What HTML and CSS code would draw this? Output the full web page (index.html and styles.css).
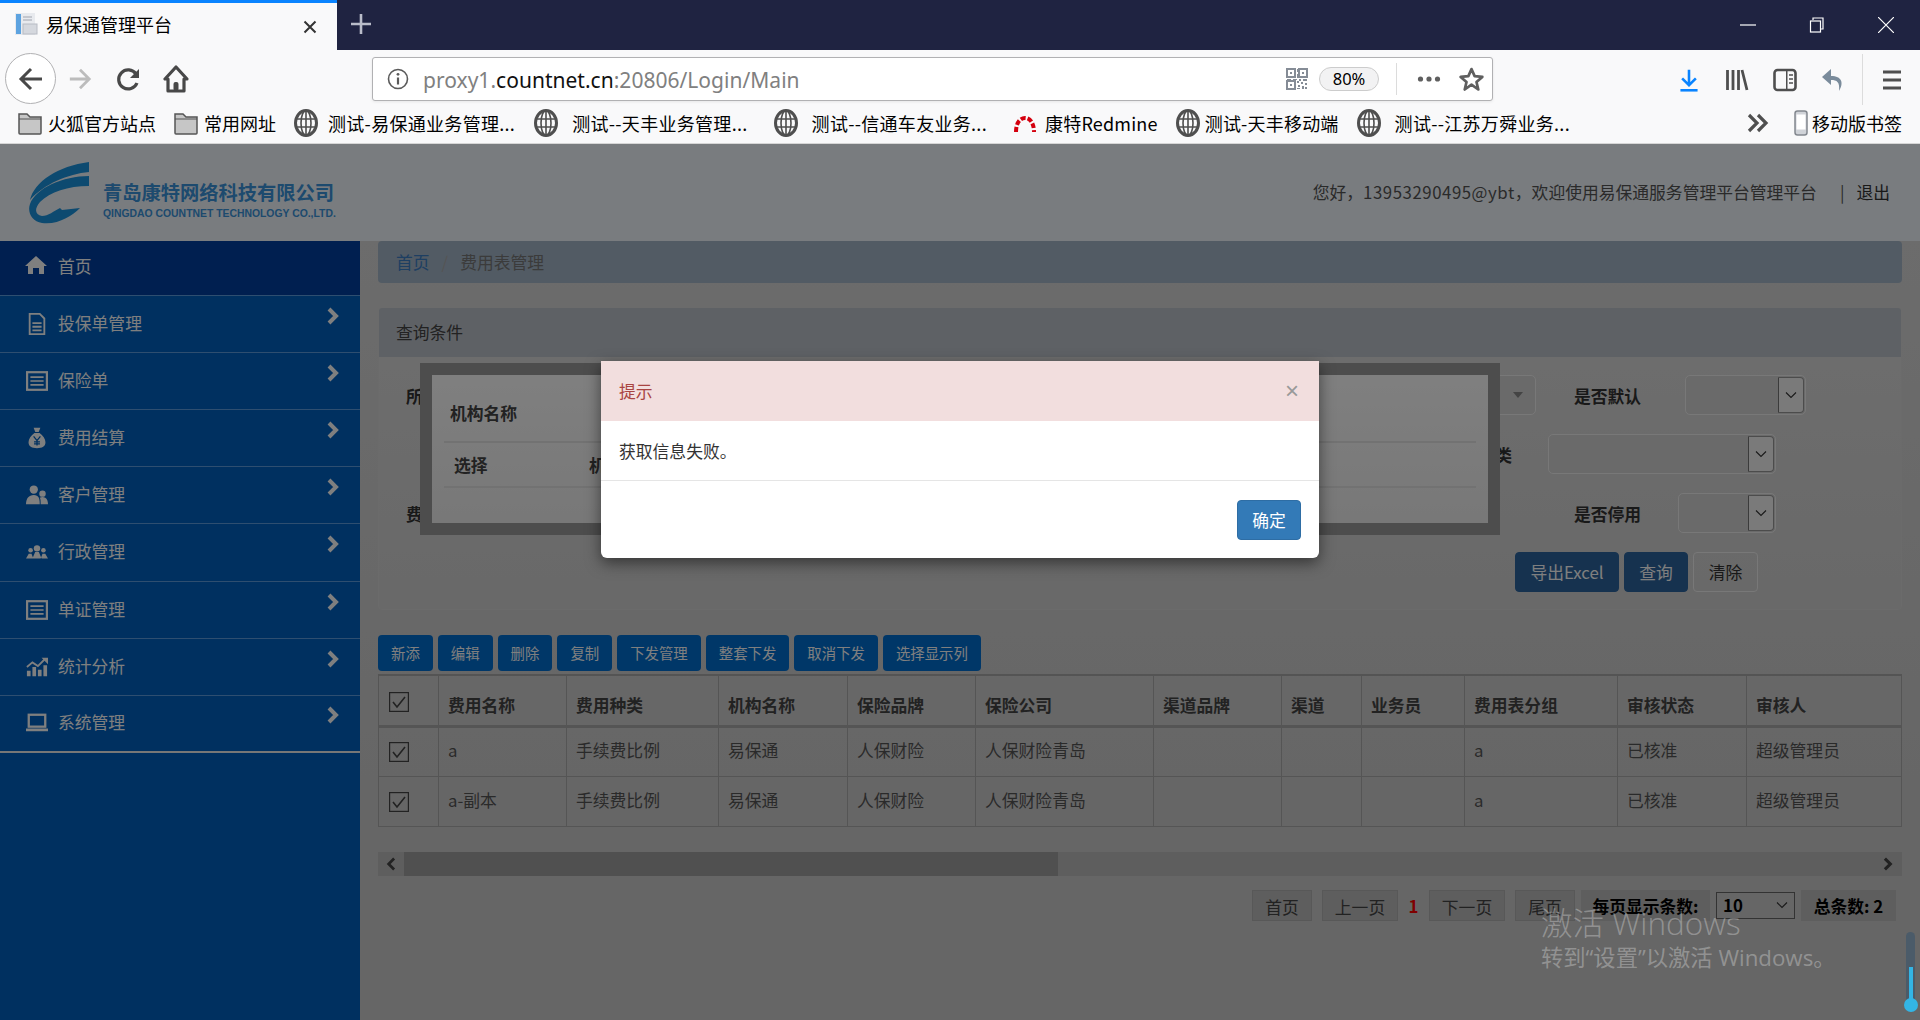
FILE: index.html
```html
<!DOCTYPE html>
<html lang="zh-CN">
<head>
<meta charset="utf-8">
<title>易保通管理平台</title>
<link rel="stylesheet" href="styles.css">
</head>
<body>
<svg class="defs" width="0" height="0">
  <symbol id="globe" viewBox="0 0 24 28"><ellipse cx="12" cy="14" rx="10.500" ry="12.500" fill="none" stroke="#4f4f4f" stroke-width="3"/><ellipse cx="12" cy="14" rx="5" ry="12.500" fill="none" stroke="#4f4f4f" stroke-width="1.600"/><path d="M2 10h20M2 18h20M12 2v24" stroke="#4f4f4f" stroke-width="1.600"/></symbol>
  <symbol id="folder" viewBox="0 0 24 24"><path d="M1 3h8l3 3h11v16a1 1 0 0 1-1 1H2a1 1 0 0 1-1-1z" fill="#c6c6c6" stroke="#555" stroke-width="1.500"/><path d="M1 8h22" stroke="#555" stroke-width="1"/></symbol>
  <symbol id="chev" viewBox="0 0 14 18"><path d="M3 2l7 7-7 7" fill="none" stroke="currentColor" stroke-width="4"/></symbol>
  <symbol id="down" viewBox="0 0 12 8"><path d="M1 1.500l5 5 5-5" fill="none" stroke="currentColor" stroke-width="1.100"/></symbol>
  <symbol id="check" viewBox="0 0 20 20"><rect x="0.600" y="0.600" width="18.800" height="18.800" fill="none" stroke="#444" stroke-width="1.200"/><path d="M4 10l4 5 8-10" fill="none" stroke="#444" stroke-width="1.600"/></symbol>
  <symbol id="listicon" viewBox="0 0 20 18"><rect x="1" y="1" width="18" height="16" fill="none" stroke="#fff" stroke-width="2"/><path d="M4 5.500h12M4 9h12M4 12.500h12" stroke="#fff" stroke-width="1.500"/></symbol>
</svg>

<header class="tabstrip">
  <div class="tab">
    <svg class="favicon" viewBox="0 0 24 24"><rect x="1" y="1" width="20" height="22" fill="#e8eaee"/><rect x="2" y="2" width="5" height="20" fill="#5da3e0"/><rect x="9" y="12" width="14" height="10" fill="#d5d8de" stroke="#b8bcc4"/><path d="M9 5h9M9 8h9" stroke="#b8bcc4" stroke-width="1.500"/></svg>
    <span class="tab-title">易保通管理平台</span>
    <svg class="tab-close" viewBox="0 0 14 14"><path d="M1.500 1.500l11 11M12.500 1.500l-11 11" stroke="#333" stroke-width="2"/></svg>
  </div>
  <svg class="tab-new" viewBox="0 0 22 22"><path d="M11 1v20M1 11h20" stroke="#b9bcc9" stroke-width="2.600"/></svg>
  <div class="winctl">
    <svg class="winbtn" viewBox="0 0 16 16"><path d="M0 8h16" stroke="#fff" stroke-width="1.200"/></svg>
    <svg class="winbtn" viewBox="0 0 16 16"><path d="M4 3V1h10v11h-3" fill="none" stroke="#fff" stroke-width="1.200"/><rect x="1.500" y="4" width="10" height="11" fill="none" stroke="#fff" stroke-width="1.200"/></svg>
    <svg class="winbtn" viewBox="0 0 16 16"><path d="M0 0l16 16M16 0L0 16" stroke="#fff" stroke-width="1.200"/></svg>
  </div>
</header>

<nav class="navbar">
  <div class="backbtn"><svg class="nav-ic" viewBox="0 0 26 26"><path d="M24 13H4M13 3L3 13l10 10" fill="none" stroke="#484848" stroke-width="3"/></svg></div>
  <svg class="nav-ic fwd" viewBox="0 0 26 26"><path d="M2 13h20M13 3l10 10-10 10" fill="none" stroke="#bcbcbc" stroke-width="3"/></svg>
  <svg class="nav-ic reload" viewBox="0 0 26 26"><path d="M21 16a9.500 9.500 0 1 1-1-9" fill="none" stroke="#484848" stroke-width="3.200"/><path d="M23 2v9h-9z" fill="#484848"/></svg>
  <svg class="nav-ic home" viewBox="0 0 26 28"><path d="M13 2L2 14h3v12h16V14h3z" fill="none" stroke="#484848" stroke-width="3.200" stroke-linejoin="round"/><rect x="10.500" y="17" width="5" height="9" rx="2" fill="#484848"/></svg>
  <div class="urlbar">
    <svg class="url-info" viewBox="0 0 22 22"><circle cx="11" cy="11" r="9.500" fill="none" stroke="#5a5a5a" stroke-width="1.600"/><path d="M11 9.500v7" stroke="#5a5a5a" stroke-width="2.200"/><circle cx="11" cy="6.300" r="1.400" fill="#5a5a5a"/></svg>
    <span class="url-text">proxy1.<b class="url-host">countnet.cn</b>:20806/Login/Main</span>
    <svg class="url-qr" viewBox="0 0 22 22"><path d="M1 1h8v8H1zM13 1h8v8h-8zM1 13h8v8H1z" fill="none" stroke="#858c96" stroke-width="2"/><path d="M4 4h2v2H4zM16 4h2v2h-2zM4 16h2v2H4zM11 1h1v3h-1zM11 6h1v4h-1zM1 11h4v1H1zM7 11h4v1H7zM13 11h2v2h-2zM17 11h4v2h-4zM11 13h2v2h-2zM15 14h2v2h-2zM19 15h2v2h-2zM12 17h2v2h-2zM16 18h2v3h-2zM11 20h3v1h-3zM19 19h2v2h-2z" fill="#858c96"/></svg>
    <span class="url-zoom">80%</span>
    <span class="url-sep"></span>
    <svg class="url-more" viewBox="0 0 24 6"><circle cx="3.500" cy="3" r="2.600" fill="#5f5f5f"/><circle cx="12" cy="3" r="2.600" fill="#5f5f5f"/><circle cx="20.500" cy="3" r="2.600" fill="#5f5f5f"/></svg>
    <svg class="url-star" viewBox="0 0 24 24"><path d="M12 2l3 6.800 7.400.7-5.600 4.900 1.700 7.200L12 17l-6.500 4.600 1.700-7.200L1.600 9.500 9 8.800z" fill="none" stroke="#5f5f5f" stroke-width="2.600" stroke-linejoin="round"/></svg>
  </div>
  <div class="tools">
    <svg class="tool" viewBox="0 0 24 28"><path d="M12 2v17M4 12l8 8 8-8" fill="none" stroke="#0a84ff" stroke-width="3"/><path d="M2 26h20" stroke="#0a84ff" stroke-width="3"/></svg>
    <svg class="tool" viewBox="0 0 24 24"><path d="M2.500 2v20M8 2v20M13.500 2v20M17 2l5 20" fill="none" stroke="#4f4f4f" stroke-width="2.800"/></svg>
    <svg class="tool" viewBox="0 0 24 24"><rect x="1.500" y="2" width="21" height="20" rx="3" fill="none" stroke="#4f4f4f" stroke-width="2.600"/><path d="M13 2h1.500v20H13z" fill="#4f4f4f"/><path d="M16 7h4M16 11h4M16 15h4" stroke="#4f4f4f" stroke-width="1.500"/></svg>
    <svg class="tool" viewBox="0 0 24 24"><path d="M10 1L1 9l9 8v-5c6 0 9 2 8 11 5-8 3-15-8-15z" fill="#7a8b9b"/></svg>
    <span class="tool-sep"></span>
    <svg class="tool" viewBox="0 0 24 24"><path d="M3 4h18M3 12h18M3 20h18" stroke="#4f4f4f" stroke-width="3.200"/></svg>
  </div>
</nav>

<div class="bookmarks">
  <span class="bm"><svg class="bm-ic"><use href="#folder"/></svg><span class="bm-gap-s">火狐官方站点</span></span>
  <span class="bm"><svg class="bm-ic"><use href="#folder"/></svg><span class="bm-gap-s">常用网址</span></span>
  <span class="bm"><svg class="bm-ic globe"><use href="#globe"/></svg><span class="bm-gap-m">测试-易保通业务管理...</span></span>
  <span class="bm"><svg class="bm-ic globe"><use href="#globe"/></svg><span class="bm-gap-l">测试--天丰业务管理...</span></span>
  <span class="bm"><svg class="bm-ic globe"><use href="#globe"/></svg><span class="bm-gap-l">测试--信通车友业务...</span></span>
  <span class="bm"><svg class="bm-ic" viewBox="0 0 24 24"><path d="M3 21c0-9 4-14 9-14s9 5 9 14" fill="none" stroke="#d4000e" stroke-width="4" stroke-dasharray="5 2"/></svg><span class="bm-gap-r">康特Redmine</span></span>
  <span class="bm"><svg class="bm-ic globe"><use href="#globe"/></svg><span class="bm-gap-xs">测试-天丰移动端</span></span>
  <span class="bm"><svg class="bm-ic globe"><use href="#globe"/></svg><span class="bm-gap-l">测试--江苏万舜业务...</span></span>
  <span class="bm-right">
    <svg class="bm-more" viewBox="0 0 22 20"><path d="M2 2l8 8-8 8M11 2l8 8-8 8" fill="none" stroke="#4f4f4f" stroke-width="3.200"/></svg>
    <svg class="bm-phone" viewBox="0 0 14 26"><rect x="1" y="1" width="12" height="24" rx="2.500" fill="#d0d3d8" stroke="#83888f" stroke-width="1.500"/><rect x="2.500" y="4.500" width="9" height="15" fill="#fff"/></svg>
    <span>移动版书签</span>
  </span>
</div>

<div class="page">
  <div class="site-header">
    <svg class="logo" viewBox="0 0 61 63"><path d="M61 0v10C40 12 16 22 2 38 6 20 30 4 61 0z" fill="#1a94e0"/><path d="M61 14v10c-21 0-39 6-49 16-6 7-5 13 2 14 6 0 12-5 18-8l2 2 18-2c-8 8-22 17-38 15C4 60-1 50 2 42c6-16 33-28 59-28z" fill="#1a94e0"/></svg>
    <div class="brand">
      <div class="brand-cn">青岛康特网络科技有限公司</div>
      <div class="brand-en">QINGDAO COUNTNET TECHNOLOGY CO.,LTD.</div>
    </div>
    <div class="userbar">
      <span>您好，<span class="latin">13953290495@ybt</span>，欢迎使用易保通服务管理平台管理平台</span>
      <span class="userbar-sep">|</span>
      <span class="logout">退出</span>
    </div>
  </div>

  <div class="site-body">
    <aside class="sidebar">
      <div class="menu-item current">
        <svg class="menu-ic home-ic" viewBox="0 0 24 20"><path d="M12 1l11 10h-3v8h-5v-6H9v6H4v-8H1z" fill="#fff"/></svg>
        <span class="menu-text">首页</span>
      </div>
      <div class="menu-item">
        <svg class="menu-ic" viewBox="0 0 20 24"><path d="M2 1h11l5 5v17H2z" fill="none" stroke="#fff" stroke-width="2"/><path d="M5 11h10M5 15h10M5 19h10" stroke="#fff" stroke-width="2"/></svg>
        <span class="menu-text">投保单管理</span><svg class="menu-chev"><use href="#chev"/></svg>
      </div>
      <div class="menu-item">
        <svg class="menu-ic"><use href="#listicon"/></svg>
        <span class="menu-text">保险单</span><svg class="menu-chev"><use href="#chev"/></svg>
      </div>
      <div class="menu-item">
        <svg class="menu-ic" viewBox="0 0 24 26"><path d="M8 1h8l-2 5h-4zM9 7h6c4 3 7 7 7 11 0 5-4 7-10 7S2 23 2 18c0-4 3-8 7-11z" fill="#fff"/><path d="M8 11l4 5 4-5M12 16v6M8.500 17.500h7M8.500 20h7" fill="none" stroke="#0060c0" stroke-width="1.500"/></svg>
        <span class="menu-text">费用结算</span><svg class="menu-chev"><use href="#chev"/></svg>
      </div>
      <div class="menu-item">
        <svg class="menu-ic" viewBox="0 0 24 22"><circle cx="8.500" cy="5" r="4.500" fill="#fff"/><path d="M0 21c0-6 3-10 8.500-10S15 15 15 21z" fill="#fff"/><circle cx="18" cy="9.500" r="3.500" fill="#fff"/><path d="M16 21c0-3 0-6-1-7 2-1 4-1 6 0 2 1 3 4 3 7z" fill="#fff"/></svg>
        <span class="menu-text">客户管理</span><svg class="menu-chev"><use href="#chev"/></svg>
      </div>
      <div class="menu-item">
        <svg class="menu-ic" viewBox="0 0 24 16"><circle cx="12" cy="4" r="3.500" fill="#fff"/><circle cx="5" cy="6" r="2.500" fill="#fff"/><circle cx="19" cy="6" r="2.500" fill="#fff"/><path d="M0 15l3-5h3l2 5zM24 15l-3-5h-3l-2 5zM7 15l3-7h4l3 7z" fill="#fff"/></svg>
        <span class="menu-text">行政管理</span><svg class="menu-chev"><use href="#chev"/></svg>
      </div>
      <div class="menu-item">
        <svg class="menu-ic"><use href="#listicon"/></svg>
        <span class="menu-text">单证管理</span><svg class="menu-chev"><use href="#chev"/></svg>
      </div>
      <div class="menu-item">
        <svg class="menu-ic" viewBox="0 0 24 20"><path d="M1 14h4v6H1zM7 10h4v10H7zM13 13h4v7h-4zM19 8h4v12h-4z" fill="#fff"/><path d="M1 10l6-5 6 4 8-8" fill="none" stroke="#fff" stroke-width="2"/><path d="M17 0h7v7z" fill="#fff"/></svg>
        <span class="menu-text">统计分析</span><svg class="menu-chev"><use href="#chev"/></svg>
      </div>
      <div class="menu-item last">
        <svg class="menu-ic" viewBox="0 0 24 20"><rect x="3" y="1" width="18" height="13" fill="none" stroke="#fff" stroke-width="2.500"/><path d="M0 16h24v3H0z" fill="#fff"/></svg>
        <span class="menu-text">系统管理</span><svg class="menu-chev"><use href="#chev"/></svg>
      </div>
    </aside>

    <main class="content">
      <div class="crumbs"><span class="crumb-link">首页</span><span class="crumb-sep">/</span><span>费用表管理</span></div>

      <section class="panel">
        <div class="panel-head">查询条件</div>
        <div class="panel-body">
          <div class="form-row">
            <span class="lbl">所属机构</span>
            <span class="grow"></span>
            <span class="combo combo-a"><span class="caret"></span></span>
            <span class="lbl lbl-right w-a">是否默认</span>
            <span class="combo combo-b"><span class="combo-btn"><svg class="combo-chev"><use href="#down"/></svg></span></span>
          </div>
          <div class="form-row row-inset">
            <span class="grow"></span>
            <span class="lbl lbl-kind">费用种类</span>
            <span class="combo combo-c"><span class="combo-btn"><svg class="combo-chev"><use href="#down"/></svg></span></span>
          </div>
          <div class="form-row row-inset">
            <span class="lbl">费用名称</span>
            <span class="grow"></span>
            <span class="lbl w-b">是否停用</span>
            <span class="combo combo-d"><span class="combo-btn"><svg class="combo-chev"><use href="#down"/></svg></span></span>
          </div>
          <div class="form-row row-btns">
            <button class="btn btn-primary">导出Excel</button>
            <button class="btn btn-primary">查询</button>
            <button class="btn btn-plain">清除</button>
          </div>
        </div>
      </section>

      <div class="actions">
        <button class="act">新添</button><button class="act">编辑</button><button class="act">删除</button><button class="act">复制</button><button class="act">下发管理</button><button class="act">整套下发</button><button class="act">取消下发</button><button class="act">选择显示列</button>
      </div>

      <table class="grid">
        <thead>
          <tr><th><svg class="chk"><use href="#check"/></svg></th><th>费用名称</th><th>费用种类</th><th>机构名称</th><th>保险品牌</th><th>保险公司</th><th>渠道品牌</th><th>渠道</th><th>业务员</th><th>费用表分组</th><th>审核状态</th><th>审核人</th></tr>
        </thead>
        <tbody>
          <tr><td><svg class="chk"><use href="#check"/></svg></td><td>a</td><td>手续费比例</td><td>易保通</td><td>人保财险</td><td>人保财险青岛</td><td></td><td></td><td></td><td>a</td><td>已核准</td><td>超级管理员</td></tr>
          <tr><td><svg class="chk"><use href="#check"/></svg></td><td>a-副本</td><td>手续费比例</td><td>易保通</td><td>人保财险</td><td>人保财险青岛</td><td></td><td></td><td></td><td>a</td><td>已核准</td><td>超级管理员</td></tr>
        </tbody>
      </table>

      <div class="hscroll">
        <svg class="hs-arrow hs-left" viewBox="0 0 14 18"><path d="M11 2L4 9l7 7" fill="none" stroke="currentColor" stroke-width="3.500"/></svg>
        <span class="hs-thumb"></span>
        <svg class="hs-arrow hs-right"><use href="#chev"/></svg>
      </div>

      <div class="pager">
        <span class="pg w-60">首页</span>
        <span class="pg w-76 ml-10">上一页</span>
        <span class="pg-cur">1</span>
        <span class="pg w-76">下一页</span>
        <span class="pg w-60 ml-10">尾页</span>
        <span class="pg-info w-129 ml-6">每页显示条数:</span>
        <span class="pg-select ml-6">10<svg class="combo-chev"><use href="#down"/></svg></span>
        <span class="pg-info w-95 ml-6">总条数: 2</span>
      </div>
    </main>
  </div>

  <div class="picker">
    <div class="picker-inner">
      <div class="picker-title">机构名称</div>
      <div class="picker-cols"><span class="pc-a">选择</span><span>机构名称</span></div>
    </div>
  </div>

  <div class="backdrop"></div>

  <div class="modal">
    <div class="modal-head"><span>提示</span><span class="modal-x">×</span></div>
    <div class="modal-body">获取信息失败。</div>
    <div class="modal-foot"><button class="modal-ok">确定</button></div>
  </div>

  <div class="activate">
    <div class="act-1">激活 Windows</div>
    <div class="act-2">转到“设置”以激活 Windows。</div>
  </div>
  <div class="slider"><span class="slider-fill"></span><span class="slider-dot"></span></div>
</div>
</body>
</html>
```
FILE: styles.css
```css
* { box-sizing: border-box; }
html, body { margin: 0; height: 100%; }
body {
  width: 1920px; height: 1020px; overflow: hidden;
  display: flex; flex-direction: column;
  font-family: "Noto Sans CJK SC", "Noto Sans", sans-serif;
  background: #ccc; color: #000;
}
.defs { position: absolute; }

/* browser chrome */
.tabstrip { height: 50px; background: #1f2341; display: flex; align-items: stretch; flex: none; }
.tab { width: 337px; background: #f9f9fa; border-top: 3px solid #0a84ff; display: flex; align-items: center; padding: 0 0 6px 14px; }
.favicon { width: 24px; height: 24px; }
.tab-title { margin-left: 8px; font-size: 18px; line-height: 24px; flex: 1; }
.tab-close { width: 14px; height: 14px; margin-right: 20px; margin-top: 6px; }
.tab-new { width: 22px; height: 22px; margin: 13px 0 0 13px; }
.winctl { margin-left: auto; display: flex; align-items: center; gap: 53px; padding-right: 26px; }
.winbtn { width: 16px; height: 16px; }

.navbar { height: 51px; background: #f9f9fa; position: relative; display: flex; align-items: center; flex: none; padding-left: 5px; z-index: 2; }
.backbtn { width: 51px; height: 51px; margin: 9px 0 3px; border-radius: 50%; background: #fff; border: 1px solid #b1b1b3; display: flex; align-items: center; justify-content: center; }
.nav-ic { width: 26px; height: 26px; }
.fwd { margin: 9px 0 3px 12px; width: 24px; height: 24px; }
.reload { margin: 10px 0 2px 24px; }
.home { margin: 9px 0 3px 21px; height: 28px; }
.urlbar { width: 1121px; height: 44px; margin: 7px 0 0 183px; background: #fff; border: 1px solid #b1b1b3; border-radius: 3px; display: flex; align-items: center; box-shadow: 0 1px 3px rgba(0,0,0,.08); }
.url-info { width: 22px; height: 22px; margin-left: 14px; }
.url-text { margin: 2px 0 0 14px; font-family: "Noto Sans", sans-serif; font-size: 21px; line-height: 28px; color: #808080; flex: 1; letter-spacing: .02px; }
.url-host { font-weight: 400; color: #111; }
.url-qr { width: 22px; height: 22px; }
.url-zoom { width: 60px; height: 24px; margin-left: 11px; border: 1px solid #ccc; border-radius: 12px; background: #f2f2f3; font-family: "Noto Sans", sans-serif; font-size: 16.500px; line-height: 22px; text-align: center; }
.url-sep { width: 1px; height: 32px; background: #dcdcdc; margin-left: 17px; }
.url-more { width: 24px; height: 6px; margin-left: 20px; }
.url-star { width: 25px; height: 25px; margin: 0 8px 0 18px; }
.tools { display: flex; align-items: center; margin-left: 184px; gap: 24px; margin-top: 8px; }
.tool { width: 24px; height: 24px; }
.tool-sep { width: 1px; height: 51px; background: #dcdcdc; margin: 0 -7px 0 -7px; }

.bookmarks { height: 43px; flex: none; background: #f9f9fa; border-bottom: 1px solid #d6d6d6; display: flex; align-items: center; padding: 2px 0 0 18px; font-size: 18px; line-height: 24px; gap: 18px; }
.bm { display: flex; align-items: center; white-space: nowrap; }
.bm-ic { width: 24px; height: 24px; }
.bm-ic.globe { height: 28px; }
.bm-gap-s { margin-left: 6px; }
.bm-gap-m { margin: 0 1px 0 10px; letter-spacing: .3px; }
.bm-gap-l { margin: 0 8px 0 14px; letter-spacing: .3px; }
.bm-gap-r { margin-left: 8px; letter-spacing: .2px; }
.bm-gap-xs { margin-left: 5px; letter-spacing: .2px; }
.bm-right { margin-left: auto; display: flex; align-items: center; padding-right: 18px; }
.bm-more { width: 22px; height: 20px; }
.bm-phone { width: 14px; height: 26px; margin: 0 4px 0 25px; }

/* page */
.page { flex: 1; position: relative; display: flex; flex-direction: column; min-height: 0; }
.site-header { height: 97px; flex: none; background: #f2f8fe; display: flex; align-items: flex-start; position: relative; }
.logo { width: 61px; height: 63px; margin: 18px 0 0 28px; }
.brand { margin: 35px 0 0 14px; }
.brand-cn { font-size: 19.250px; line-height: 26px; font-weight: 700; color: #3a94dc; white-space: nowrap; }
.brand-en { margin-top: 2px; font-family: "Liberation Sans", sans-serif; font-size: 10.400px; line-height: 14px; font-weight: 700; color: #3a94dc; white-space: nowrap; }
.userbar { margin-left: auto; padding: 35px 30px 0 0; font-size: 16.800px; line-height: 26px; color: #555; display: flex; }
.latin { letter-spacing: .55px; }
.userbar-sep { margin: 0 12px 0 23px; }
.logout { color: #333; }

.site-body { flex: 1; display: flex; min-height: 0; background: linear-gradient(#d8d8d8, #cccccc 75%); }
.sidebar { width: 360px; flex: none; background: #0060c0; color: #fff; font-size: 16.800px; line-height: 24px; }
.menu-item { height: 57.120px; display: flex; align-items: center; padding-left: 26px; border-bottom: 1px solid #5c9ce0; }
.menu-item.current { height: 55px; background: #003ea0; padding: 0 0 3px 24px; }
.menu-item.last { border-bottom: 2px solid #eee; }
.menu-text { margin-bottom: 2px; }
.menu-ic { width: 22px; height: 22px; margin-right: 10px; flex: none; }
.home-ic { width: 24px; margin-right: 10px; margin-bottom: 3px; }
.menu-chev { width: 14px; height: 18px; margin: 0 20px 16px auto; color: #fff; }

.content { flex: 1; min-width: 0; padding: 0 18px; }
.crumbs { height: 42px; background: #a4b6c8; border-radius: 4px; padding: 0 18px 1px; display: flex; align-items: center; font-size: 16.800px; line-height: 24px; color: #777; margin-bottom: 24px; }
.crumb-link { color: #3c7ec4; }
.crumb-sep { margin: 0 12px; color: #aaa; }
.panel { height: 303px; border-radius: 4px; background: linear-gradient(#dcdcdc, #d2d2d2); border: 1px solid #d6d6d6; margin-bottom: 25px; overflow: hidden; }
.panel-head { height: 49px; background: #bcc2ca; padding: 0 17px; font-size: 16.800px; line-height: 48px; color: #444; }
.panel-body { padding: 18px 97px 0 27px; display: flex; flex-direction: column; gap: 19px; }
.form-row { height: 40px; display: flex; align-items: center; font-size: 16.800px; font-weight: 700; color: #333; }
.row-inset { padding-right: 28px; }
.row-btns { justify-content: flex-end; gap: 5px; padding-right: 46px; font-weight: 400; }
.grow { flex: 1; }
.lbl { line-height: 24px; white-space: nowrap; margin-top: 1px; }
.lbl-right { margin-left: 38px; }
.w-a { width: 111px; }
.w-b { width: 104px; }
.lbl-kind { margin-right: 36px; }
.combo { height: 40px; background: #d4d4d4; border: 1px solid #f0f0f0; border-radius: 5px; display: flex; justify-content: flex-end; align-items: stretch; }
.combo-a { width: 96px; align-items: center; padding-right: 12px; }
.combo-b { width: 121px; margin-right: -2px; }
.combo-c { width: 228px; }
.combo-d { width: 98px; }
.caret { border: 5px solid transparent; border-top: 6px solid #888; border-bottom: 0; }
.combo-btn { width: 26px; margin: 1px; background: #f4f4f4; border: 1px solid #999; border-left-color: #777; display: flex; align-items: center; justify-content: center; border-radius: 0 4px 4px 0; }
.combo-chev { width: 12px; height: 8px; color: #333; }
.btn { height: 40px; border-radius: 4px; font: inherit; line-height: 24px; padding: 0 0 1px; }
.btn-primary { background: #2c649e; border: 1px solid #2c649e; color: #fff; width: 104px; }
.btn-primary + .btn-primary { width: 64px; }
.btn-plain { background: transparent; border: 1px solid #f0f0f0; color: #333; width: 65px; }

.actions { display: flex; gap: 5px; margin-bottom: 3px; }
.act { height: 36px; padding: 0 13px; border: 0; border-radius: 4px; background: #006ed0; color: #fff; font: 14.400px/20px "Noto Sans CJK SC", sans-serif; }

.grid { width: 1524px; table-layout: fixed; border-collapse: collapse; border-top: 2px solid #a8a8a8; font-size: 16.800px; color: #555; }
.grid th, .grid td { border-left: 1px solid #aaa; border-right: 1px solid #aaa; text-align: left; padding: 0 9px 3px; line-height: 24px; }
.grid th { height: 51px; border-bottom: 3px solid #aaa; font-weight: 700; color: #444; vertical-align: bottom; padding-bottom: 8px; }
.grid td { height: 50px; border-bottom: 1px solid #aaa; }
.grid th:first-child { vertical-align: middle; padding: 3px 0 0 10px; }
.grid td:first-child { padding: 1px 0 0 10px; }
.grid th:nth-child(1) { width: 60px; }
.grid th:nth-child(2) { width: 128px; }
.grid th:nth-child(3) { width: 152px; }
.grid th:nth-child(4) { width: 129px; }
.grid th:nth-child(5) { width: 128px; }
.grid th:nth-child(6) { width: 178px; }
.grid th:nth-child(7) { width: 128px; }
.grid th:nth-child(8) { width: 80px; }
.grid th:nth-child(9) { width: 103px; }
.grid th:nth-child(10) { width: 153px; }
.grid th:nth-child(11) { width: 129px; }
.chk { width: 20px; height: 20px; display: block; }

.hscroll { height: 24px; margin-top: 25px; background: #bcbcbc; display: flex; align-items: center; color: #444; }
.hs-arrow { width: 14px; height: 14px; flex: none; }
.hs-left { margin: 0 6px; }
.hs-thumb { width: 654px; height: 24px; background: #a0a0a0; }
.hs-right { margin-left: auto; margin-right: 7px; }

.pager { margin-top: 14px; padding-right: 6px; height: 31px; display: flex; justify-content: flex-end; align-items: stretch; font-size: 16.800px; line-height: 32px; color: #444; }
.pg { background: #bcbcbc; border: 1px solid #b0b0b0; text-align: center; }
.w-60 { width: 60px; }
.w-76 { width: 76px; }
.w-129 { width: 129px; }
.w-95 { width: 95px; }
.ml-10 { margin-left: 10px; }
.ml-6 { margin-left: 6px; }
.pg-cur { width: 31px; text-align: center; color: #f00; font-weight: 700; }
.pg-info { background: #bcbcbc; color: #000; font-weight: 700; text-align: center; }
.pg-select { width: 79px; height: 27px; margin-top: 2px; border: 1px solid #666; color: #000; font-weight: 700; line-height: 25px; padding: 0 6px; display: flex; align-items: center; justify-content: space-between; }

/* covering layers */
.picker { position: absolute; left: 420px; top: 219px; width: 1080px; height: 172px; background: #fff; border: 12px solid #9a9a9a; }
.picker-inner { height: 100%; padding: 0 12px; background: linear-gradient(#fff, #f0f0f0); font-size: 16.800px; line-height: 24px; font-weight: 700; color: #444; }
.picker-title { height: 68px; padding: 26px 6px 0; border-bottom: 2px solid #e4e4e4; line-height: 24px; }
.picker-cols { height: 45px; display: flex; align-items: center; padding-left: 10px; border-bottom: 2px solid #e4e4e4; }
.pc-a { width: 135px; }
.backdrop { position: absolute; inset: 0; background: rgba(0,0,0,.5); }

.modal { position: absolute; left: 601px; top: 217px; width: 718px; height: 197px; background: #fff; border-radius: 0 0 6px 6px; box-shadow: 0 5px 15px rgba(0,0,0,.5); font-size: 16.800px; line-height: 24px; overflow: hidden; }
.modal-head { height: 60px; background: #f2dede; color: #a94442; padding: 0 18px; display: flex; align-items: center; justify-content: space-between; }
.modal-x { color: #999; font-size: 24px; font-family: "Liberation Sans", sans-serif; margin-right: 2px; }
.modal-body { height: 60px; padding: 0 18px; display: flex; align-items: center; color: #333; border-bottom: 1px solid #e5e5e5; }
.modal-foot { padding: 19px 18px 0; display: flex; justify-content: flex-end; }
.modal-ok { width: 64px; height: 40px; padding: 0; border: 1px solid #2e6da4; border-radius: 4px; background: #337ab7; color: #fff; font: inherit; }

.activate { position: absolute; left: 1541px; top: 760px; color: rgba(255,255,255,.3); font-family: "Open Sans", "Noto Sans CJK SC", sans-serif; white-space: nowrap; }
.act-1 { font-size: 31.500px; line-height: 38px; font-weight: 300; }
.act-2 { font-size: 22.300px; line-height: 30px; margin-top: 1px; }
.slider { position: absolute; left: 1906px; top: 788px; width: 9px; height: 74px; background: #4b5b69; border-radius: 5px; }
.slider-fill { position: absolute; left: 3px; top: 35px; width: 4px; height: 38px; background: #33b5e5; }
.slider-dot { position: absolute; left: -2px; top: 66px; width: 14px; height: 14px; border-radius: 50%; background: #33b5e5; }
```
